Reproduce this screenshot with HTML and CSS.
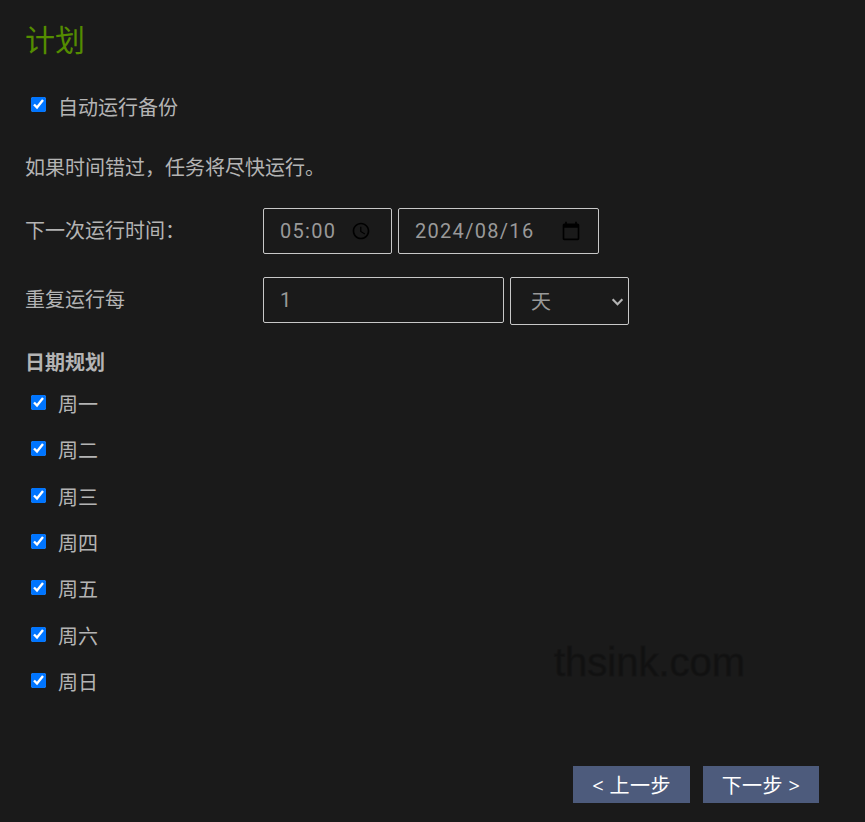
FILE: index.html
```html
<!DOCTYPE html>
<html lang="zh-CN">
<head>
    <meta charset="UTF-8">
    <title>计划</title>
    <link rel="stylesheet" href="styles.css">
</head>
<body>
    <div class="page">
        <h1 class="title">计划</h1>

        <label class="check auto-run"><input type="checkbox" checked><span>自动运行备份</span></label>

        <p class="note">如果时间错过，任务将尽快运行。</p>

        <div class="form-row next-run">
            <div class="row-label">下一次运行时间：</div>
            <div class="field time-field">
                <span>05:00</span>
                <svg class="picker-icon" viewBox="0 0 24 24"><path d="M11.99 2C6.47 2 2 6.48 2 12s4.47 10 9.99 10C17.52 22 22 17.52 22 12S17.52 2 11.99 2zM12 20c-4.42 0-8-3.58-8-8s3.58-8 8-8 8 3.58 8 8-3.58 8-8 8zm.5-13H11v6l5.25 3.15.75-1.23-4.5-2.67z"/></svg>
            </div>
            <div class="field date-field">
                <span>2024/08/16</span>
                <svg class="picker-icon" viewBox="0 0 24 24"><path d="M20 3h-1V1h-2v2H7V1H5v2H4c-1.1 0-2 .9-2 2v16c0 1.1.9 2 2 2h16c1.1 0 2-.9 2-2V5c0-1.1-.9-2-2-2zm0 18H4V8h16v13z"/></svg>
            </div>
        </div>

        <div class="form-row repeat">
            <div class="row-label">重复运行每</div>
            <div class="field number-field"><span>1</span></div>
            <div class="field select-field">
                <span>天</span>
                <svg class="chevron" viewBox="0 0 12 12"><path d="M1.5 4l4.5 4.5L10.500 4" fill="none" stroke="#b4b4b4" stroke-width="2"/></svg>
            </div>
        </div>

        <h2 class="section-title">日期规划</h2>

        <div class="days">
            <label class="check"><input type="checkbox" checked><span>周一</span></label>
            <label class="check"><input type="checkbox" checked><span>周二</span></label>
            <label class="check"><input type="checkbox" checked><span>周三</span></label>
            <label class="check"><input type="checkbox" checked><span>周四</span></label>
            <label class="check"><input type="checkbox" checked><span>周五</span></label>
            <label class="check"><input type="checkbox" checked><span>周六</span></label>
            <label class="check"><input type="checkbox" checked><span>周日</span></label>
        </div>

        <div class="actions">
            <button class="btn" type="button">&lt; 上一步</button>
            <button class="btn" type="button">下一步 &gt;</button>
        </div>

        <div class="watermark">thsink.com</div>
    </div>
</body>
</html>
```

FILE: styles.css
```css
html, body {
    margin: 0;
    padding: 0;
}

body {
    background-color: #1a1a1a;
    color: #b4b4b4;
    font-family: "Open Sans", "Noto Sans CJK SC", sans-serif;
    font-size: 20px;
}

.page {
    position: relative;
    height: 822px;
    padding: 0 25px;
    box-sizing: border-box;
    overflow: hidden;
}

.title {
    margin: 0;
    padding-top: 20px;
    height: 72px;
    box-sizing: border-box;
    font-size: 30px;
    line-height: 40px;
    font-weight: 400;
    color: #548c00;
}

.check {
    display: flex;
    align-items: center;
    height: 46.33px;
    padding-left: 6px;
}

.check input {
    width: 15px;
    height: 15px;
    margin: 0 12px 5px 0;
    accent-color: #0075ff;
}

.check span {
    line-height: 28px;
}

.auto-run {
    height: 28px;
    margin-top: 21px;
}

.auto-run span {
    margin-top: 2px;
}

.note {
    margin: 33px 0 0;
    line-height: 28px;
}

.form-row {
    display: flex;
    align-items: flex-start;
}

.next-run {
    margin-top: 26px;
}

.repeat {
    margin-top: 23px;
}

.row-label {
    width: 238px;
    line-height: 46px;
}

.field {
    display: flex;
    align-items: center;
    justify-content: space-between;
    height: 46px;
    box-sizing: border-box;
    border: 1px solid #c8c8c8;
    border-radius: 2px;
    padding: 0 16px;
    font-family: "Roboto", "Noto Sans CJK SC", sans-serif;
    letter-spacing: 1.3px;
    color: #999;
}

.time-field {
    width: 129px;
    margin-right: 6px;
}

.date-field {
    width: 201px;
}

.number-field {
    width: 241px;
    margin-right: 6px;
}

.select-field {
    width: 119px;
    height: 48px;
    padding: 0 4px 2px 20px;
}

.picker-icon {
    width: 20px;
    height: 20px;
    flex: none;
    margin-right: 1px;
    fill: #000;
}

.time-field .picker-icon {
    margin-right: 4px;
}

.chevron {
    width: 13px;
    height: 13px;
    flex: none;
    margin-top: 2px;
}

.section-title {
    margin: 24px 0 0;
    font-size: 20px;
    line-height: 28px;
    font-weight: 700;
}

.days {
    margin-top: 5px;
}

.actions {
    position: absolute;
    right: 46px;
    bottom: 19px;
    display: flex;
    gap: 13px;
}

.btn {
    height: 37px;
    border: 0;
    padding: 0;
    width: 117px;
    background-color: #4d5b7c;
    color: #fff;
    font-family: "Open Sans", "Noto Sans CJK SC", sans-serif;
    font-size: 20px;
    letter-spacing: 0.4px;
}

.btn + .btn {
    width: 116px;
}

.watermark {
    position: absolute;
    left: 554px;
    top: 638px;
    font-family: "Liberation Sans", sans-serif;
    font-size: 40px;
    line-height: 48px;
    color: #111;
    -webkit-text-stroke: 1px #151515;
}
```
